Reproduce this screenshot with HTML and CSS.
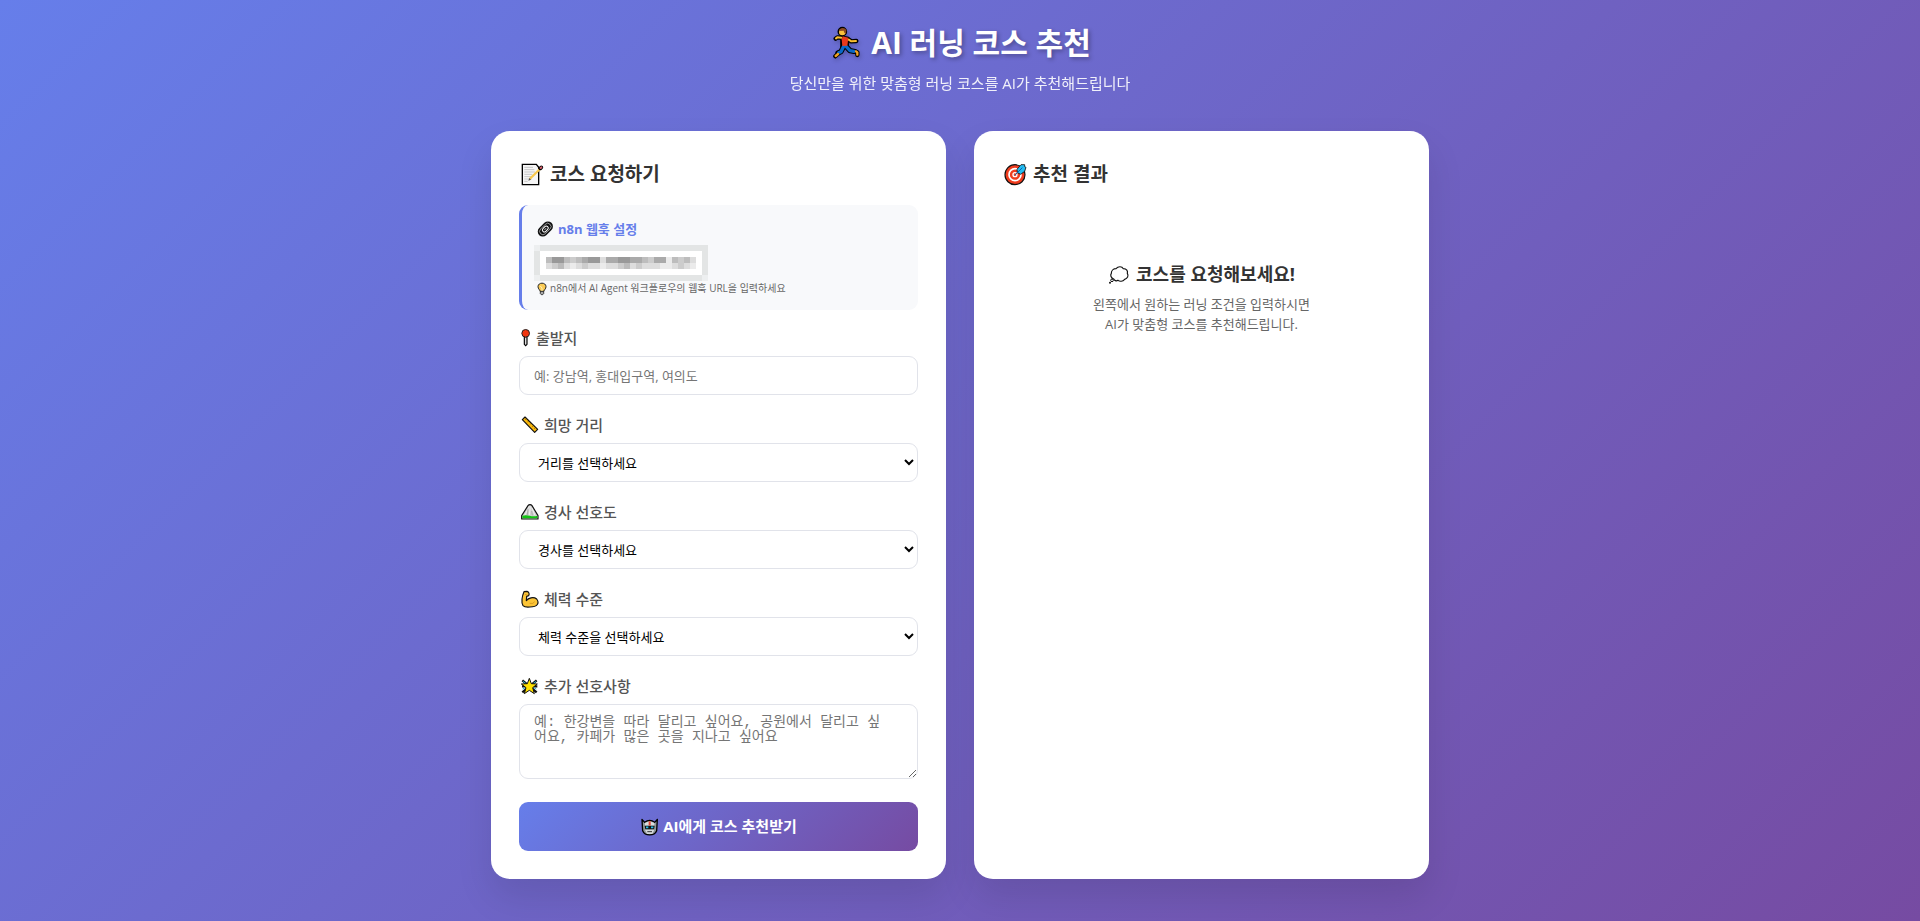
FILE: index.html
```html
<!DOCTYPE html>
<html lang="ko">
<head>
<meta charset="UTF-8">
<meta name="viewport" content="width=device-width, initial-scale=1">
<title>AI 러닝 코스 추천</title>
<link rel="stylesheet" href="styles.css">
</head>
<body>
<div class="container">
  <header class="header">
    <h1 class="title">
      <svg class="title-icon" width="37" height="34" viewBox="147 51 111 102" aria-hidden="true">
        <g fill="none" stroke="#000" stroke-linecap="round" stroke-linejoin="round">
          <circle cx="187" cy="68" r="10" stroke-width="9"/>
          <path d="M188 88l14 2-3 20-11 3z" stroke-width="15"/>
          <path d="M186 86l-14-1-5 4M205 91l9 6 15-1" stroke-width="13"/>
          <path d="M190 114l-7 14-9 4M199 113l11 12 12 2" stroke-width="16"/>
          <path d="M174 134l-8 8M227 127l5 3v8" stroke-width="13"/>
        </g>
        <g fill="none" stroke-linecap="round" stroke-linejoin="round">
          <path d="M184 86l-12-1-4 3M206 92l8 5 14-1" stroke="#fbbf30" stroke-width="6"/>
          <path d="M191 112l-8 16-7 3M198 112l12 13 12 2" stroke="#0a68c8" stroke-width="10"/>
          <path d="M174 135l-7 6M228 127l4 3v7" stroke="#f2a21c" stroke-width="7"/>
        </g>
        <path d="M188 82l17 4-3 24-15 1-2-20z" fill="#e8391b"/>
        <circle cx="187" cy="69" r="10" fill="#f9c13c"/>
        <path d="M177 66c1-11 18-12 22-3l-1 12-5-4-2-6z" fill="#8b4a20"/>
      </svg>
      <span>AI 러닝 코스 추천</span>
    </h1>
    <p class="subtitle">당신만을 위한 맞춤형 러닝 코스를 AI가 추천해드립니다</p>
  </header>

  <main class="cards">
    <section class="card">
      <h2 class="card-title">
        <svg width="25" height="24" viewBox="102 111 75 72" aria-hidden="true">
          <path d="M112 118h42l7 9v52h-49z" fill="#f6f6f6" stroke="#000" stroke-width="4"/>
          <path d="M118 127h26M118 134h30M118 141h32M118 148h24M118 155h20M118 162h22M118 169h10" stroke="#bdbdbd" stroke-width="2.5"/>
          <path d="M134 162l34-33" stroke="#f8c84c" stroke-width="7"/>
          <path d="M130 167l3-8 5 5z" fill="#555"/>
          <path d="M166 130l3-3" stroke="#000" stroke-width="11" stroke-linecap="round"/>
          <path d="M167 129l2-2" stroke="#d7606b" stroke-width="6" stroke-linecap="round"/>
        </svg>
        <span>코스 요청하기</span>
      </h2>

      <div class="webhook">
        <h3 class="webhook-title">
          <svg width="18" height="18" viewBox="153 286 54 54" aria-hidden="true">
            <g transform="rotate(-45 181 313)" fill="none">
              <rect x="155" y="298" width="52" height="30" rx="15" fill="#111"/>
              <rect x="161" y="303" width="40" height="20" rx="10" stroke="#ccc" stroke-width="2"/>
              <rect x="171" y="307" width="20" height="12" rx="6" stroke="#fff" stroke-width="3"/>
              <path d="M177 313h8" stroke="#999" stroke-width="3"/>
            </g>
          </svg>
          <span>n8n 웹훅 설정</span>
        </h3>
        <svg class="webhook-mask" width="174" height="36" viewBox="0 0 29 6" shape-rendering="crispEdges" role="img" aria-label="웹훅 URL">
          <path fill="#e3e5e5" d="M0 0h29v6H0z"/>
          <path fill="#edeff0" d="M0 0h1v1H0zM28 5h1v1h-1zM0 5h1v1H0z"/>
          <path fill="#fff" d="M1 1h27v4H1z"/>
          <path fill="#bdbdbd" d="M2 2h1v1H2zM5 2h1v1H5zM7 2h1v1H7zM18 2h1v1h-1zM23 2h1v1h-1zM25 2h1v1h-1z"/>
          <path fill="#999" d="M3 2h2v1H3zM9 2h2v1H9zM14 2h2v1h-2z"/>
          <path fill="#aaa" d="M8 2h1v1H8zM12 2h2v1h-2zM16 2h2v1h-2zM20 2h2v1h-2z"/>
          <path fill="#ccc" d="M6 2h1v1H6zM19 2h1v1h-1zM24 2h1v1h-1zM3 3h1v1H3zM8 3h1v1H8zM14 3h1v1h-1zM17 3h1v1h-1zM24 3h1v1h-1z"/>
          <path fill="#bbb" d="M4 3h1v1H4zM15 3h1v1h-1z"/>
          <path fill="#ddd" d="M11 2h1v1h-1zM26 2h1v1h-1zM2 3h1v1H2zM5 3h1v1H5zM7 3h1v1H7zM9 3h2v1H9zM12 3h2v1h-2zM16 3h1v1h-1zM18 3h3v1h-3zM23 3h1v1h-1zM25 3h1v1h-1z"/>
          <path fill="#ebebeb" d="M22 2h1v1h-1zM6 3h1v1H6zM11 3h1v1h-1zM21 3h2v1h-2zM26 3h1v1h-1z"/>
        </svg>
        <p class="webhook-hint">
          <svg width="11" height="14" viewBox="153 472 33 42" aria-hidden="true">
            <path d="M165 500c0-5-6-7-6-14 0-14 24-14 24 0 0 7-6 9-6 14z" fill="#fbcb55" stroke="#222" stroke-width="3"/>
            <path d="M166 500h10v7l-3 3h-4l-3-3z" fill="#aaa" stroke="#222" stroke-width="2.5"/>
            <path d="M166 484l5 6v9" stroke="#fff0b5" stroke-width="3" fill="none"/>
          </svg>
          <span>n8n에서 AI Agent 워크플로우의 웹훅 URL을 입력하세요</span>
        </p>
      </div>

      <form class="form">
        <div class="field">
          <label class="label" for="start">
            <svg width="13" height="20" viewBox="27 30 39 60" aria-hidden="true">
              <path d="M43 56h8v23l-4 4-4-4z" fill="#ddd" stroke="#000" stroke-width="3.5"/>
              <circle cx="47" cy="46" r="11.500" fill="#f0350f" stroke="#222" stroke-width="3"/>
            </svg>
            <span>출발지</span>
          </label>
          <input class="control" id="start" type="text" placeholder="예: 강남역, 홍대입구역, 여의도">
        </div>
        <div class="field">
          <label class="label" for="distance">
            <svg width="21" height="20" viewBox="27 51 63 60" aria-hidden="true">
              <path d="M37 65l8-8 38 37-9 9z" fill="#fbb90c" stroke="#111" stroke-width="3.5" stroke-linejoin="round"/>
              <path d="M49 62l-4 4M56 69l-4 4M63 76l-4 4M70 83l-4 4M76 89l-4 4" stroke="#6b4a00" stroke-width="1.5"/>
            </svg>
            <span>희망 거리</span>
          </label>
          <select class="control" id="distance"><option>거리를 선택하세요</option></select>
        </div>
        <div class="field">
          <label class="label" for="slope">
            <svg width="21" height="20" viewBox="27 15 63 60" aria-hidden="true">
              <path d="M35 66V56l19-30c3-4 9-4 12 0l18 30v10z" fill="#cfcfcf" stroke="#111" stroke-width="3.5" stroke-linejoin="round"/>
              <path d="M58 28l-14 27M61 28l-3 27M65 32l10 23" stroke="#f0f0f0" stroke-width="3"/>
              <path d="M54 35l-2 20M65 42l2 13" stroke="#999" stroke-width="2"/>
              <path d="M37 56q10-3 22 0t23 0v8H37z" fill="#12c512"/>
            </svg>
            <span>경사 선호도</span>
          </label>
          <select class="control" id="slope"><option>경사를 선택하세요</option></select>
        </div>
        <div class="field">
          <label class="label" for="fitness">
            <svg width="21" height="20" viewBox="27 271 63 60" aria-hidden="true">
              <path d="M42 279l9-1c6 2 8 8 5 13l-6 2-1 13c6-8 21-13 31-5 9 12 3 24-20 24-10 1-17 0-21-4-6-8-3-29 3-42z" fill="#fbc436" stroke="#111" stroke-width="3.500" stroke-linejoin="round"/>
              <path d="M45 287l7 2M59 314q11 3 15-5" fill="none" stroke="#c88813" stroke-width="2"/>
            </svg>
            <span>체력 수준</span>
          </label>
          <select class="control" id="fitness"><option>체력 수준을 선택하세요</option></select>
        </div>
        <div class="field">
          <label class="label" for="extra">
            <svg width="21" height="20" viewBox="27 20 63 60" aria-hidden="true">
              <path d="M37 33l43 36M80 33L37 69M36 51h46" stroke="#111" stroke-width="7"/>
              <path d="M39 36l9 7M78 36l-9 7M38 59l8-4M79 59l-8-4" stroke="#22a7c8" stroke-width="3"/>
              <path d="M58 27l6 16 18 1-14 11 5 18-15-10-15 10 5-18-14-11 18-1z" fill="#ffe100" stroke="#111" stroke-width="3"/>
            </svg>
            <span>추가 선호사항</span>
          </label>
          <textarea class="control control-area" id="extra" placeholder="예: 한강변을 따라 달리고 싶어요, 공원에서 달리고 싶&#10;어요, 카페가 많은 곳을 지나고 싶어요"></textarea>
        </div>
        <button class="submit" type="button">
          <svg width="20" height="20" viewBox="390 442 60 60" aria-hidden="true">
            <path d="M396 449l8 9c9-7 21-7 30 0l8-9-2 34c-7 17-35 17-42 0z" fill="#8f9698" stroke="#000" stroke-width="4" stroke-linejoin="round"/>
            <path d="M405 460q14-9 28 0v8h-28z" fill="#d9dddd"/>
            <path d="M416 455h6v12h-6z" fill="#e94235"/>
            <path d="M404 468h30l-2 11h-26z" fill="#111"/>
            <path d="M408 473h7M423 473h7" stroke="#25bde9" stroke-width="5"/>
            <path d="M405 480h28l-6 13h-16z" fill="#d4d9da"/>
            <path d="M412 486h14" stroke="#333" stroke-width="3"/>
          </svg>
          <span>AI에게 코스 추천받기</span>
        </button>
      </form>
    </section>

    <section class="card">
      <h2 class="card-title">
        <svg width="25" height="24" viewBox="906 111 75 72" aria-hidden="true">
          <circle cx="945" cy="149" r="30" fill="#f03c1e" stroke="#111" stroke-width="3.500"/>
          <circle cx="945" cy="149" r="18" fill="#f03c1e" stroke="#fff" stroke-width="5"/>
          <circle cx="945" cy="149" r="6" fill="#f03c1e" stroke="#fff" stroke-width="4"/>
          <path d="M952 143l-1-10 12-14h11v6l4 2-4 12-12 9z" fill="#23bdf2" stroke="#111" stroke-width="2.500"/>
          <path d="M944 151l23-23" stroke="#0b62b5" stroke-width="3"/>
        </svg>
        <span>추천 결과</span>
      </h2>
      <div class="empty">
        <h3 class="empty-title">
          <svg width="24" height="22" viewBox="150 42 72 66" aria-hidden="true">
            <path d="M167 90c-8-3-11-11-7-17 0-9 7-14 14-14 7-8 18-7 22 0 10 0 14 7 12 14 5 8 0 16-8 18-6 7-15 7-20 3-5 3-11 1-13-4z" fill="#fff" stroke="#111" stroke-width="3.5"/>
            <circle cx="162" cy="94" r="4" fill="#fff" stroke="#111" stroke-width="3"/>
            <circle cx="156" cy="101" r="3" fill="#111"/>
          </svg>
          <span>코스를 요청해보세요!</span>
        </h3>
        <p class="empty-text">왼쪽에서 원하는 러닝 조건을 입력하시면<br>AI가 맞춤형 코스를 추천해드립니다.</p>
      </div>
    </section>
  </main>
</div>
</body>
</html>
```
FILE: styles.css
```css
* {
  box-sizing: border-box;
  margin: 0;
  padding: 0;
}

body {
  min-height: 100vh;
  padding: 20px;
  background: linear-gradient(135deg, #667eea 0%, #764ba2 100%);
  color: #333;
  font-family: "Open Sans", "Noto Sans CJK KR", sans-serif;
}

svg {
  display: block;
  flex: none;
}

.container {
  max-width: 938px;
  margin: 0 auto;
}

.header {
  margin-bottom: 37px;
  color: #fff;
  text-align: center;
}

.title {
  display: flex;
  justify-content: center;
  align-items: center;
  gap: 5px;
  margin-bottom: 7px;
  font-size: 30px;
  line-height: 45px;
  text-shadow: 2px 2px 4px rgba(0, 0, 0, 0.3);
}

.title-icon {
  filter: drop-shadow(1px 2px 2px rgba(0, 0, 0, 0.2));
}

.subtitle {
  font-size: 15px;
  line-height: 22px;
  opacity: 0.9;
}

.cards {
  display: grid;
  grid-template-columns: 1fr 1fr;
  gap: 28px;
}

.card {
  padding: 28px;
  border-radius: 19px;
  background: #fff;
  box-shadow: 0 18px 36px rgba(0, 0, 0, 0.1);
}

.card-title {
  display: flex;
  align-items: center;
  gap: 6px;
  margin-bottom: 16px;
  font-size: 19px;
  line-height: 30px;
}

.webhook {
  margin-bottom: 17px;
  padding: 14px;
  border-left: 3px solid #667eea;
  border-radius: 9px;
  background: #f8f9fb;
}

.webhook-title {
  display: flex;
  align-items: center;
  gap: 4px;
  margin-bottom: 6px;
  color: #667eea;
  font-size: 13px;
  line-height: 20px;
}

.webhook-mask {
  margin-left: -2px;
}

.webhook-hint {
  display: flex;
  align-items: center;
  gap: 3px;
  color: #666;
  font-size: 10px;
  line-height: 15px;
}

.field {
  margin-bottom: 19px;
}

.label {
  display: flex;
  align-items: center;
  gap: 4px;
  margin-bottom: 7px;
  color: #555;
  font-size: 15px;
  font-weight: 500;
  line-height: 22px;
}

.control {
  display: block;
  width: 100%;
  height: 39px;
  padding: 0 14px;
  border: 1px solid #e1e3ea;
  border-radius: 9px;
  background: #fff;
  color: #000;
  font-family: inherit;
  font-size: 13px;
}

.control::placeholder {
  color: #757575;
}

.control-area {
  height: 75px;
  padding: 10px 14px;
  font-family: "Liberation Mono", "Noto Sans CJK KR", monospace;
  font-size: 14px;
  line-height: 15px;
  resize: vertical;
}

.submit {
  display: flex;
  justify-content: center;
  align-items: center;
  gap: 3px;
  width: 100%;
  margin-top: 23px;
  padding: 13px;
  border: 0;
  border-radius: 9px;
  background: linear-gradient(135deg, #667eea 0%, #764ba2 100%);
  color: #fff;
  font-family: inherit;
  font-size: 15px;
  font-weight: 700;
  line-height: 23px;
}

.empty {
  padding: 56px 28px;
  text-align: center;
}

.empty-title {
  display: flex;
  justify-content: center;
  align-items: center;
  gap: 4px;
  margin-bottom: 7px;
  font-size: 18px;
  line-height: 26px;
}

.empty-text {
  color: #666;
  font-size: 13px;
  line-height: 20px;
}

@media (max-width: 760px) {
  .cards {
    grid-template-columns: 1fr;
  }
}
```
